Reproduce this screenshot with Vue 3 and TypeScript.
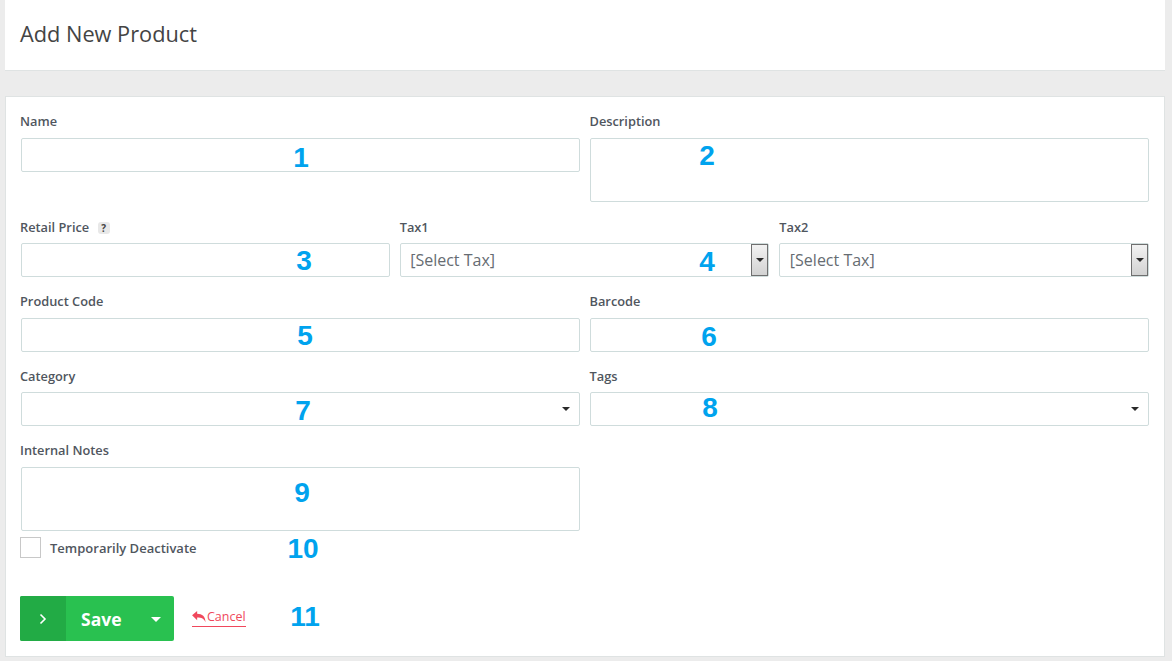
<script setup lang="ts">
const callouts: { n: number; x: number; y: number }[] = [
  { n: 1, x: 295, y: 61 },
  { n: 2, x: 701, y: 59 },
  { n: 3, x: 298, y: 164 },
  { n: 4, x: 701, y: 165 },
  { n: 5, x: 299, y: 239 },
  { n: 6, x: 703, y: 240 },
  { n: 7, x: 297, y: 314 },
  { n: 8, x: 704, y: 311 },
  { n: 9, x: 296, y: 396 },
  { n: 10, x: 297, y: 452 },
  { n: 11, x: 299, y: 520 },
]
</script>

<template>
  <div class="page">
    <header class="head">
      <h1>Add New Product</h1>
    </header>
    <form class="card" @submit.prevent>
      <div class="row">
        <div class="field">
          <label>Name</label>
          <input type="text" />
        </div>
        <div class="field">
          <label>Description</label>
          <textarea rows="3"></textarea>
        </div>
      </div>
      <div class="row tight row-tax">
        <div class="field">
          <label>Retail Price <span class="help">?</span></label>
          <input type="text" />
        </div>
        <div class="field">
          <label>Tax1</label>
          <div class="tax-select">
            <span>[Select Tax]</span>
            <span class="native-btn"><i class="arrow dark"></i></span>
          </div>
        </div>
        <div class="field">
          <label>Tax2</label>
          <div class="tax-select">
            <span>[Select Tax]</span>
            <span class="native-btn"><i class="arrow dark"></i></span>
          </div>
        </div>
      </div>
      <div class="row">
        <div class="field">
          <label>Product Code</label>
          <input type="text" />
        </div>
        <div class="field">
          <label>Barcode</label>
          <input type="text" />
        </div>
      </div>
      <div class="row tight">
        <div class="field">
          <label>Category</label>
          <div class="combo"><i class="arrow dark"></i></div>
        </div>
        <div class="field">
          <label>Tags</label>
          <div class="combo"><i class="arrow dark"></i></div>
        </div>
      </div>
      <div class="row">
        <div class="field">
          <label>Internal Notes</label>
          <textarea rows="3"></textarea>
        </div>
        <div class="field"></div>
      </div>
      <div class="check">
        <span class="box"></span>
        <span>Temporarily Deactivate</span>
      </div>
      <div class="actions">
        <div class="save">
          <span class="save-icon">
            <svg width="8" height="12" viewBox="0 0 8 12"><path d="M1.5 1.5 6 6l-4.500 4.500" fill="none" stroke="#fff" stroke-width="1.600" /></svg>
          </span>
          <span class="save-label">Save</span>
          <i class="arrow light"></i>
        </div>
        <a class="cancel" href="#">
          <svg width="14" height="12" viewBox="0 0 15 13"><path d="M0 4.700 5.500 0v2.900c5.500 0 9 3 9 9.300-1.500-3.700-4-5.200-9-5.200v2.900z" fill="#f0485c" /></svg>Cancel
        </a>
      </div>
      <span
        v-for="c in callouts"
        :key="c.n"
        class="callout"
        :style="{ left: c.x + 'px', top: c.y + 'px' }"
      >{{ c.n }}</span>
    </form>
  </div>
</template>

<style>
html,
body {
  margin: 0;
  background: #ececec;
}
</style>

<style scoped>
.page {
  width: 1172px;
  height: 661px;
  padding: 0 7px 0 5px;
  box-sizing: border-box;
  overflow: hidden;
  font-family: "Open Sans", sans-serif;
  color: #444a52;
}
.head {
  height: 71px;
  box-sizing: border-box;
  padding: 0 15px;
  display: flex;
  align-items: center;
  background: #fff;
  border-bottom: 1px solid #dfe3e3;
}
h1 {
  margin: 0 0 4px;
  font-size: 21.750px;
  font-weight: 400;
  color: #444;
}
.card {
  position: relative;
  margin-top: 25px;
  height: 561px;
  box-sizing: border-box;
  padding: 15px 15px 0 14px;
  background: #fff;
  border: 1px solid #dfe3e3;
}
.row {
  display: flex;
  align-items: flex-start;
  gap: 10px;
  margin-top: 15px;
}
.row:first-child {
  margin-top: 0;
}
.row-tax {
  margin-top: 16px;
}
.field {
  flex: 1 1 0;
  min-width: 0;
}
label {
  display: block;
  height: 18px;
  margin-bottom: 8px;
  font-size: 12.800px;
  line-height: 18px;
  font-weight: 600;
  color: #50565e;
}
.tight label {
  margin-bottom: 7px;
}
.help {
  display: inline-block;
  width: 12px;
  height: 12px;
  margin-left: 5px;
  border-radius: 3px;
  background: #e8e8e8;
  color: #444;
  font-size: 10px;
  line-height: 12px;
  text-align: center;
  font-weight: 700;
}
input,
textarea,
.tax-select,
.combo {
  display: block;
  width: 100%;
  box-sizing: border-box;
  margin: 0;
  border: 1px solid #cfdcdc;
  border-radius: 2px;
  background: #fff;
  outline: none;
}
.row .field:first-child > input,
.row .field:first-child > textarea,
.row .field:first-child > .combo {
  width: calc(100% - 1px);
  margin-left: 1px;
}
input,
.combo,
.tax-select {
  height: 34px;
}
textarea {
  height: 64px;
  resize: none;
}
.tax-select {
  position: relative;
  padding: 0 9.500px;
  font-size: 16px;
  line-height: 32px;
  color: #666c72;
}
.native-btn {
  position: absolute;
  top: 0;
  right: 0;
  bottom: 0;
  width: 17px;
  box-sizing: border-box;
  display: flex;
  align-items: center;
  justify-content: center;
  border: 1px solid #6f6f6f;
  background: linear-gradient(#f2f2f2, #d2d2d2);
}
.arrow {
  display: block;
  width: 0;
  height: 0;
  border-left: 4px solid transparent;
  border-right: 4px solid transparent;
}
.arrow.dark {
  border-top: 4px solid #2a2a2a;
}
.arrow.light {
  margin: 2px 0 0 1px;
  border-left-width: 5px;
  border-right-width: 5px;
  border-top: 5px solid #fff;
}
.combo {
  display: flex;
  align-items: center;
  justify-content: flex-end;
  padding-right: 9px;
}
.check {
  display: flex;
  align-items: center;
  gap: 9px;
  height: 21px;
  margin-top: 6px;
  font-size: 13px;
  font-weight: 600;
  color: #50565e;
}
.box {
  width: 21px;
  height: 21px;
  box-sizing: border-box;
  border: 1px solid #c8c8c8;
}
.actions {
  display: flex;
  align-items: center;
  gap: 18px;
  margin-top: 38px;
}
.save {
  display: flex;
  align-items: center;
  width: 154px;
  height: 45px;
  border-radius: 2px;
  background: #29c150;
  color: #fff;
  overflow: hidden;
}
.save-icon {
  width: 46px;
  height: 100%;
  display: flex;
  align-items: center;
  justify-content: center;
  background: #22ab45;
}
.save-label {
  width: 84px;
  padding: 1px 0 0 15px;
  box-sizing: border-box;
  font-size: 17.500px;
  font-weight: 700;
}
.cancel {
  display: flex;
  align-items: center;
  gap: 1px;
  margin-top: -2px;
  padding-bottom: 1px;
  border-bottom: 1px solid #f0485c;
  color: #f0485c;
  font-size: 12.500px;
  line-height: 16px;
  text-decoration: none;
}
.callout {
  position: absolute;
  transform: translate(-50%, -50%);
  font-family: "Liberation Sans", sans-serif;
  font-size: 28px;
  font-weight: 700;
  line-height: 1;
  color: #00a3ee;
}
</style>
